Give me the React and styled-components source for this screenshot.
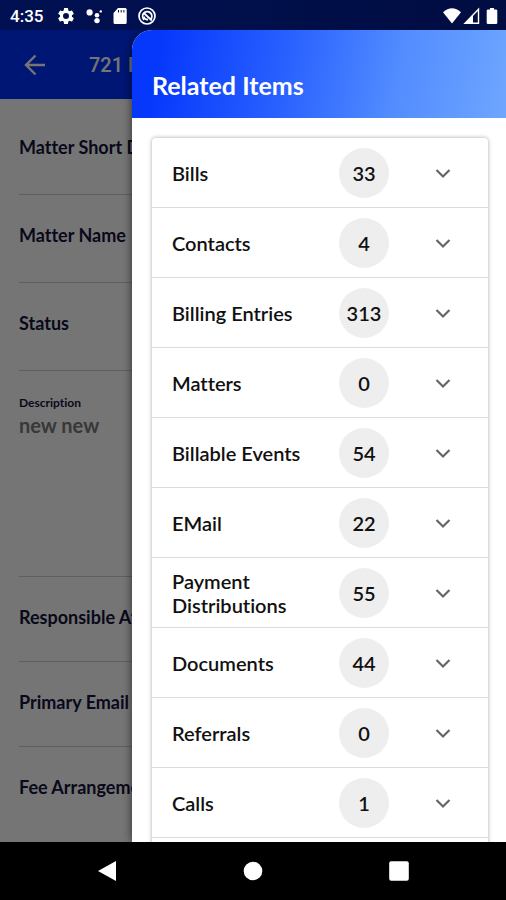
import React, { useState } from "react";
import styled, { createGlobalStyle } from "styled-components";

const GlobalStyle = createGlobalStyle`
  * {
    box-sizing: border-box;
  }
  body {
    margin: 0;
    font-family: Lato, "Open Sans", sans-serif;
    font-variant-ligatures: none;
    background: #000;
  }
  button {
    font-family: inherit;
    font-variant-ligatures: inherit;
    border: 0;
    margin: 0;
    padding: 0;
    background: transparent;
    cursor: pointer;
  }
`;
const Screen = styled.div`
  display: flex;
  flex-direction: column;
  height: 100vh;
  overflow: hidden;
`;
const StatusBar = styled.div`
  display: flex;
  align-items: center;
  justify-content: space-between;
  flex: none;
  height: 30px;
  padding: 2px 4px 0 10px;
  background: linear-gradient(90deg, #011052, #000d42);
  color: white;
`;
const StatusGroup = styled.div`
  display: flex;
  align-items: center;
  gap: ${(props) => props.$gap}px;
  svg {
    display: block;
  }
`;
const Time = styled.span`
  font-family: Roboto, sans-serif;
  font-size: 17px;
  font-weight: 500;
  line-height: 20px;
  margin-right: 4px;
`;
const Body = styled.div`
  position: relative;
  flex: 1;
  min-height: 0;
  overflow: hidden;
  background: white;
`;
const AppBar = styled.header`
  display: flex;
  align-items: center;
  gap: 40px;
  height: 69px;
  padding: 0 20px;
  background: #0030ff;
  color: white;
  white-space: nowrap;
`;
const BackButton = styled.button`
  display: flex;
  color: inherit;
`;
const PageTitle = styled.h1`
  margin: 0;
  font-family: Roboto, sans-serif;
  font-size: 20px;
  font-weight: 500;
  line-height: 24px;
`;
const Fields = styled.main`
  padding: 8px 19px 0;
`;
const Field = styled.div`
  height: ${(props) => props.$height}px;
  padding-top: ${(props) => (props.$filled ? 24 : 28)}px;
  border-bottom: 1px solid #cfcfcf;
  color: #14143c;
  font-size: 18px;
  font-weight: 700;
  line-height: 24px;
  white-space: nowrap;
  &:last-child {
    border-bottom: 0;
  }
`;
const SmallLabel = styled.div`
  font-size: 12px;
  line-height: 16px;
`;
const FieldValue = styled.div`
  color: #7a7a7a;
  font-size: 20px;
  line-height: 28px;
`;
const Scrim = styled.div`
  position: absolute;
  inset: 0;
  background: rgba(0, 0, 0, 0.54);
`;
const Drawer = styled.aside`
  position: absolute;
  top: 0;
  right: 0;
  bottom: 0;
  left: 132px;
  overflow: hidden;
  border-top-left-radius: 20px;
  background: white;
  box-shadow: 0 0 10px rgba(0, 0, 0, 0.6);
`;
const DrawerHeader = styled.header`
  height: 88px;
  padding: 39px 20px 0;
  background: linear-gradient(100deg, #0638fc 8%, #2a62ff 42%, #528cff 70%, #6ea6ff 100%);
`;
const DrawerTitle = styled.h2`
  margin: 0;
  color: white;
  font-size: 25px;
  font-weight: 700;
  line-height: 32px;
`;
const Card = styled.div`
  margin: 20px 18px 0 20px;
  padding-bottom: 20px;
  border-radius: 4px;
  background: white;
  box-shadow: 0 0 4px rgba(0, 0, 0, 0.35);
`;
const ItemRow = styled.button`
  display: flex;
  align-items: center;
  width: 100%;
  height: 70px;
  padding: 0 33px 0 20px;
  border-bottom: 1px solid #dcdcdc;
  color: #111;
  text-align: left;
`;
const ItemName = styled.span`
  flex: 1;
  padding-right: 20px;
  font-size: 20px;
  font-weight: 600;
  line-height: 24px;
`;
const Count = styled.span`
  display: flex;
  align-items: center;
  justify-content: center;
  width: 50px;
  height: 50px;
  margin-right: 42px;
  border-radius: 50%;
  background: #eee;
  font-size: 20px;
  font-weight: 600;
`;
const Chevron = styled.svg`
  flex: none;
  display: block;
  transform: ${(props) => (props.$open ? "rotate(180deg)" : "none")};
`;
const NavBar = styled.nav`
  display: flex;
  align-items: center;
  justify-content: space-around;
  flex: none;
  height: 58px;
  padding: 0 34px;
  background: black;
  svg {
    display: block;
  }
`;

const items = [
  { name: "Bills", count: 33 },
  { name: "Contacts", count: 4 },
  { name: "Billing Entries", count: 313 },
  { name: "Matters", count: 0 },
  { name: "Billable Events", count: 54 },
  { name: "EMail", count: 22 },
  { name: "Payment Distributions", count: 55 },
  { name: "Documents", count: 44 },
  { name: "Referrals", count: 0 },
  { name: "Calls", count: 1 },
];

const GearIcon = () => (
  <svg width="20" height="20" viewBox="0 0 24 24" fill="currentColor">
    <path d="M19.14 12.94c.04-.3.06-.61.06-.94 0-.32-.02-.64-.07-.94l2.03-1.58a.49.49 0 0 0 .12-.61l-1.92-3.32a.49.49 0 0 0-.59-.22l-2.39.96c-.5-.38-1.03-.7-1.62-.94l-.36-2.54a.48.48 0 0 0-.48-.41h-3.84a.48.48 0 0 0-.47.41l-.36 2.54c-.59.24-1.13.57-1.62.94l-2.39-.96a.48.48 0 0 0-.59.22L2.74 8.87a.48.48 0 0 0 .12.61l2.03 1.58c-.05.3-.09.63-.09.94s.02.64.07.94l-2.03 1.58a.49.49 0 0 0-.12.61l1.92 3.32c.12.22.37.29.59.22l2.39-.96c.5.38 1.03.7 1.62.94l.36 2.54c.05.24.24.41.48.41h3.84c.24 0 .44-.17.47-.41l.36-2.54c.59-.24 1.13-.56 1.62-.94l2.39.96c.22.08.47 0 .59-.22l1.92-3.32a.48.48 0 0 0-.12-.61l-2.01-1.58zM12 15.6a3.6 3.6 0 1 1 0-7.2 3.6 3.6 0 0 1 0 7.2z" />
  </svg>
);

const AssistantIcon = () => (
  <svg width="18" height="18" viewBox="0 0 18 18" fill="currentColor">
    <circle cx="4.6" cy="5.4" r="3.1" />
    <circle cx="12" cy="8.2" r="2.3" />
    <circle cx="12" cy="13.6" r="2.7" />
    <circle cx="15.8" cy="4.4" r="1.2" />
  </svg>
);

const SdCardIcon = () => (
  <svg width="16" height="18" viewBox="0 0 16 18">
    <path d="M6 1h7.200a1.500 1.500 0 0 1 1.500 1.500v13a1.500 1.500 0 0 1-1.500 1.500H3a1.500 1.500 0 0 1-1.500-1.500V6z" fill="currentColor" />
    <path d="M6.500 3v2.500M9.200 3v2.500M11.900 3v2.500" stroke="#011052" strokeWidth="1" />
  </svg>
);

const AppIcon = () => (
  <svg width="20" height="20" viewBox="0 0 20 20" fill="none" stroke="currentColor">
    <circle cx="10" cy="10" r="8" strokeWidth="1.700" />
    <path d="M7.200 13.700a4.600 4.600 0 1 1 6.500-.4" strokeWidth="1.900" />
    <path d="M6.800 7l8 7.500M7 10.500a3 3 0 0 0 4 2.800" strokeWidth="1.800" />
  </svg>
);

const App = () => {
  const [openItem, setOpenItem] = useState(null);

  return (
    <Screen>
      <GlobalStyle />
      <StatusBar>
        <StatusGroup $gap={9}>
          <Time>4:35</Time>
          <GearIcon />
          <AssistantIcon />
          <SdCardIcon />
          <AppIcon />
        </StatusGroup>
        <StatusGroup $gap={1}>
          <svg width="20" height="18" viewBox="0 0 20 18">
            <path d="M1 5.200Q10-2.800 19 5.200L10 16.500z" fill="currentColor" />
          </svg>
          <svg width="18" height="18" viewBox="0 0 18 18">
            <path d="M15.500 2.200v14H2z" fill="none" stroke="currentColor" strokeWidth="1.400" />
            <path d="M10 7.500v9H1.500z" fill="currentColor" />
          </svg>
          <svg width="20" height="18" viewBox="0 0 20 18">
            <path d="M8 1h4v1.400h2q1.300 0 1.300 1.300V15.700q0 1.300-1.300 1.300H6q-1.300 0-1.300-1.300V3.700q0-1.300 1.300-1.300h2z" fill="currentColor" />
          </svg>
        </StatusGroup>
      </StatusBar>
      <Body>
        <AppBar>
          <BackButton aria-label="Back">
            <svg width="29" height="30" viewBox="0 0 29 30" fill="none" stroke="currentColor" strokeWidth="2.400">
              <path d="M25 15H7M15.500 5.500L6 15l9.500 9.500" />
            </svg>
          </BackButton>
          <PageTitle>721 Fee</PageTitle>
        </AppBar>
        <Fields>
          <Field $height={88}>Matter Short Desc</Field>
          <Field $height={88}>Matter Name</Field>
          <Field $height={88}>Status</Field>
          <Field $height={206} $filled>
            <SmallLabel>Description</SmallLabel>
            <FieldValue>new new</FieldValue>
          </Field>
          <Field $height={85}>Responsible Attorney</Field>
          <Field $height={85}>Primary Email</Field>
          <Field $height={85}>Fee Arrangement</Field>
        </Fields>
        <Scrim />
        <Drawer>
          <DrawerHeader>
            <DrawerTitle>Related Items</DrawerTitle>
          </DrawerHeader>
          <Card>
            {items.map((item) => (
              <ItemRow
                key={item.name}
                aria-expanded={openItem === item.name}
                onClick={() => setOpenItem(openItem === item.name ? null : item.name)}
              >
                <ItemName>{item.name}</ItemName>
                <Count>{item.count}</Count>
                <Chevron $open={openItem === item.name} width="24" height="24" viewBox="0 0 24 24">
                  <path d="M5.500 9l6.500 6.500L18.500 9" fill="none" stroke="#666" strokeWidth="2.200" />
                </Chevron>
              </ItemRow>
            ))}
          </Card>
        </Drawer>
      </Body>
      <NavBar>
        <button aria-label="Back">
          <svg width="22" height="22" viewBox="0 0 22 22">
            <path d="M20 1v20L2 11z" fill="white" />
          </svg>
        </button>
        <button aria-label="Home">
          <svg width="22" height="22" viewBox="0 0 22 22">
            <circle cx="11" cy="11" r="9.300" fill="white" />
          </svg>
        </button>
        <button aria-label="Recent apps">
          <svg width="22" height="22" viewBox="0 0 22 22">
            <rect x="1.200" y="1.200" width="19.600" height="19.600" rx="2" fill="white" />
          </svg>
        </button>
      </NavBar>
    </Screen>
  );
};

export default App;
